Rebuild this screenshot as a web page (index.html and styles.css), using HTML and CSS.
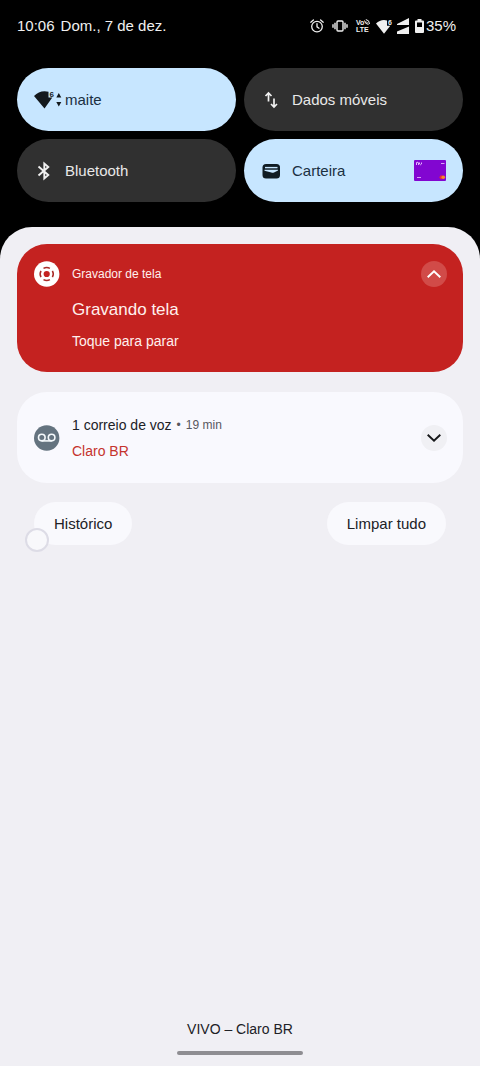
FILE: index.html
```html
<!DOCTYPE html>
<html lang="pt-BR">
<head>
<meta charset="utf-8">
<meta name="viewport" content="width=device-width, initial-scale=1">
<title>Notificações</title>
<link rel="stylesheet" href="styles.css">
</head>
<body>
<header class="status">
  <time class="clock">10:06</time>
  <span class="date">Dom., 7 de dez.</span>
  <div class="indicators">
    <svg class="ind-alarm" width="14" height="14" viewBox="0 0 14 14" fill="none" stroke="currentColor" stroke-width="1.3" stroke-linecap="round" aria-hidden="true"><circle cx="7" cy="7.6" r="5.3"/><path d="M7 4.6v3.2l2 1.4M.8 3.2 3.4 1M13.2 3.2 10.6 1"/></svg>
    <svg class="ind-vibrate" width="16" height="12" viewBox="0 0 16 12" fill="none" stroke="currentColor" stroke-width="1.4" aria-hidden="true"><rect x="5" y="1" width="6" height="10" rx="1"/><path d="M3 2.7v6.6M13 2.7v6.6M1 4.3v3.4M15 4.3v3.4"/></svg>
    <span class="volte"><span class="volte-top">Vo<svg width="6" height="6" viewBox="0 0 6 6" fill="none" stroke="currentColor" stroke-width="1" aria-hidden="true"><path d="M.5 1.500Q.8 5 4.500 5.500M1.800.500Q5.500 1 5.500 5M2 2.500 4 4.500"/></svg></span><span>LTE</span></span>
    <svg class="ind-wifi" width="17" height="15" viewBox="0 0 17 15" aria-hidden="true"><path fill="currentColor" d="M0 4.500Q3.500 1 8 1q1.700 0 3 .4v5.300h3.300L8 14.800Z"/><text x="12" y="6" class="wifi-six">6</text></svg>
    <svg class="ind-signal" width="12" height="16" viewBox="0 0 12 16" fill="currentColor" aria-hidden="true"><path d="M12 0v7H0V6ZM12 8.500V16H0v-2.500Z"/></svg>
    <svg class="ind-battery" width="9" height="14" viewBox="0 0 9 14" aria-hidden="true"><path fill="currentColor" fill-rule="evenodd" d="M2.500 0h4v1.500H8q1 0 1 1V13q0 1-1 1H1q-1 0-1-1V2.500q0-1 1-1h1.500ZM2 3.500V8h5V3.500Z"/></svg>
    <span class="percent">35%</span>
  </div>
</header>

<section class="tiles" aria-label="Configurações rápidas">
  <button class="tile tile-on" type="button">
    <svg class="tile-wifi" width="28" height="20" viewBox="0 0 28 20" fill="#14191d" aria-hidden="true"><path d="M0 6Q4.500 1.300 10.500 1.300q2.300 0 4 .5v5.700h3.800L10.500 18.500Z"/><text x="15.500" y="6.500" class="tile-six">6</text><path d="M22.300 7.500 24.800 3l2.500 4.500ZM22.300 12l2.500 4.500 2.500-4.500Z"/></svg>
    <span>maite</span>
  </button>
  <button class="tile" type="button">
    <svg class="tile-icon" width="20" height="20" viewBox="0 0 20 20" fill="none" stroke="#f0f0f0" stroke-width="1.700" aria-hidden="true"><path d="M7.500 11.500V3.500M4.500 6 7.500 3l3 3M13 8.500v8M10 14l3 3 3-3"/></svg>
    <span>Dados móveis</span>
  </button>
  <button class="tile" type="button">
    <svg class="tile-icon" width="20" height="20" viewBox="0 0 20 20" fill="none" stroke="#f0f0f0" stroke-width="1.900" aria-hidden="true"><path d="m4.500 5.500 9.800 8.500-4 3.500v-15l4 3.500-9.800 8.500"/></svg>
    <span>Bluetooth</span>
  </button>
  <button class="tile tile-on" type="button">
    <svg class="tile-icon" width="20" height="20" viewBox="0 0 20 20" aria-hidden="true"><rect x="1.500" y="3" width="17.500" height="14.500" rx="3.500" fill="#101c24"/><path d="M4 6.600h12.500" stroke="#c7e6ff" stroke-width="1.400"/><path d="M3.500 8.800h13.500v.8l-4 1.800q-1.300.5-2.600.1L3.500 9.800Z" fill="#c7e6ff"/></svg>
    <span>Carteira</span>
    <svg class="card" width="32" height="21" viewBox="0 0 32 21" aria-hidden="true"><rect width="32" height="21" rx="1" fill="#8206d1"/><path d="M2.500 5V2.500q2-.8 2 .5v2M5.500 2.500V4q1 1.500 2 0V2.500" fill="none" stroke="#e3b8fa"/><path d="M27 3.500h3.500M3 17.500h4" stroke="#d9a2f7"/><circle cx="27.500" cy="17.300" r="2" fill="#e5293e"/><circle cx="29.300" cy="17.300" r="1.800" fill="#f58a2b"/></svg>
  </button>
</section>

<main class="shade">
  <article class="note note-recorder">
    <svg class="note-icon" width="26" height="26" viewBox="0 0 26 26" aria-hidden="true"><circle cx="12.700" cy="13" r="12.700" fill="#fff"/><circle cx="12.700" cy="13" r="3.100" fill="#c42220"/><path d="M9.500 7.300A6.500 6.500 0 0 1 15.900 7.300M18.400 9.800A6.500 6.500 0 0 1 18.400 16.200M15.900 18.700A6.500 6.500 0 0 1 9.500 18.700M7 16.200A6.500 6.500 0 0 1 7 9.800" fill="none" stroke="#a92b28" stroke-width="1.500"/></svg>
    <div class="note-body">
      <p class="app-name">Gravador de tela</p>
      <h2 class="recording">Gravando tela</h2>
      <p class="hint">Toque para parar</p>
    </div>
    <button class="toggle toggle-light" type="button" aria-label="Recolher">
      <svg width="14" height="8" viewBox="0 0 14 8" fill="none" stroke="currentColor" stroke-width="1.900" aria-hidden="true"><path d="m.7 7.300 6.300-6 6.300 6"/></svg>
    </button>
  </article>

  <article class="note note-voice">
    <svg class="note-icon" width="26" height="26" viewBox="0 0 26 26" aria-hidden="true"><circle cx="12.700" cy="13" r="12.700" fill="#64737f"/><g fill="none" stroke="#f4f8fb" stroke-width="1.600"><circle cx="7.800" cy="12.600" r="3.300"/><circle cx="17.600" cy="12.600" r="3.300"/><path d="M7.800 15.900h9.800"/></g></svg>
    <div class="note-body">
      <h2 class="voice-title">1 correio de voz<span class="dot">•</span><span class="age">19 min</span></h2>
      <p class="carrier">Claro BR</p>
    </div>
    <button class="toggle" type="button" aria-label="Expandir">
      <svg width="14" height="8" viewBox="0 0 14 8" fill="none" stroke="currentColor" stroke-width="1.900" aria-hidden="true"><path d="m.7.700 6.300 6 6.300-6"/></svg>
    </button>
  </article>

  <div class="actions">
    <button class="pill" type="button">Histórico</button>
    <button class="pill" type="button">Limpar tudo</button>
    <span class="touch" aria-hidden="true"></span>
  </div>

  <footer class="footer">
    <p class="network">VIVO – Claro BR</p>
    <div class="home-bar"></div>
  </footer>
</main>
</body>
</html>
```
FILE: styles.css
```css
* {
  box-sizing: border-box;
}

body {
  display: flex;
  flex-direction: column;
  min-height: 100vh;
  margin: 0;
  background: #000;
  color: #202126;
  font-family: "Liberation Sans", Arial, sans-serif;
  font-size: 15px;
  line-height: 20px;
}

h2,
p {
  margin: 0;
  font-weight: 400;
}

button {
  border: 0;
  font: inherit;
  color: inherit;
}

svg {
  display: block;
  flex: none;
}

.status {
  display: flex;
  align-items: center;
  gap: 6px;
  padding: 16px 24px 0 17px;
  color: #f0f0f0;
}

.indicators {
  display: flex;
  align-items: center;
  margin-left: auto;
}

.ind-vibrate {
  margin-left: 8px;
}

.volte {
  width: 16px;
  margin-left: 8px;
  font-size: 7px;
  font-weight: 700;
  line-height: 7px;
}

.volte-top {
  display: flex;
}

.volte > span:last-child {
  display: block;
}

.ind-wifi {
  margin-left: 4px;
}

.wifi-six {
  fill: currentColor;
  font-size: 7px;
  font-weight: 700;
}

.ind-signal {
  margin-left: 4px;
}

.ind-battery {
  margin-left: 6px;
}

.percent {
  margin-left: 2px;
}

.tiles {
  display: grid;
  grid-template-columns: 1fr 1fr;
  gap: 8px;
  padding: 32px 17px 25px;
}

.tile {
  display: flex;
  align-items: center;
  height: 63px;
  padding: 0 17px;
  border-radius: 32px;
  background: #303030;
  color: #e8e8e8;
  text-align: left;
}

.tile-on {
  background: #c7e6ff;
  color: #1b3042;
}

.tile-wifi {
  margin-right: 3px;
}

.tile-icon {
  margin-right: 11px;
}

.tile-six {
  font-size: 8px;
  font-weight: 700;
}

.card {
  margin-left: auto;
}

.shade {
  display: flex;
  flex: 1;
  flex-direction: column;
  padding: 17px 17px 11px;
  border-radius: 32px 32px 0 0;
  background: #f0eff4;
}

.note {
  display: flex;
  align-items: center;
  gap: 12px;
  padding: 0 16px 0 17px;
  border-radius: 30px;
}

.note-body {
  flex: 1;
}

.note-recorder {
  align-items: flex-start;
  padding-top: 17px;
  padding-bottom: 21px;
  background: #c42220;
  color: #fff0ee;
}

.app-name {
  font-size: 12px;
  line-height: 26px;
}

.recording {
  margin-top: 12px;
  font-size: 17px;
  line-height: 22px;
}

.hint {
  margin-top: 10px;
  font-size: 14px;
}

.note-voice {
  margin-top: 20px;
  padding-top: 23px;
  padding-bottom: 22px;
  background: #f9f9fe;
}

.voice-title {
  display: flex;
  align-items: center;
  gap: 5px;
  font-size: 14px;
}

.dot,
.age {
  color: #58585e;
  font-size: 12px;
}

.carrier {
  margin-top: 6px;
  color: #c5332d;
  font-size: 14px;
}

.toggle {
  display: grid;
  place-items: center;
  width: 26px;
  height: 26px;
  padding: 0;
  border-radius: 50%;
  background: #f0f0f4;
  color: #16171a;
}

.toggle-light {
  background: #d14b48;
  color: #fff;
}

.actions {
  position: relative;
  display: flex;
  justify-content: space-between;
  padding: 19px 17px 0;
}

.pill {
  height: 43px;
  padding: 0 20px;
  border-radius: 22px;
  background: #f9f9fd;
}

.touch {
  position: absolute;
  top: 45px;
  left: 8px;
  width: 24px;
  height: 24px;
  border: 2px solid #dddce6;
  border-radius: 50%;
  background: #f8f8fb;
}

.footer {
  margin-top: auto;
  text-align: center;
}

.network {
  font-size: 14px;
}

.home-bar {
  width: 126px;
  height: 4px;
  margin: 12px auto 0;
  border-radius: 2px;
  background: #8e8d92;
}
```
